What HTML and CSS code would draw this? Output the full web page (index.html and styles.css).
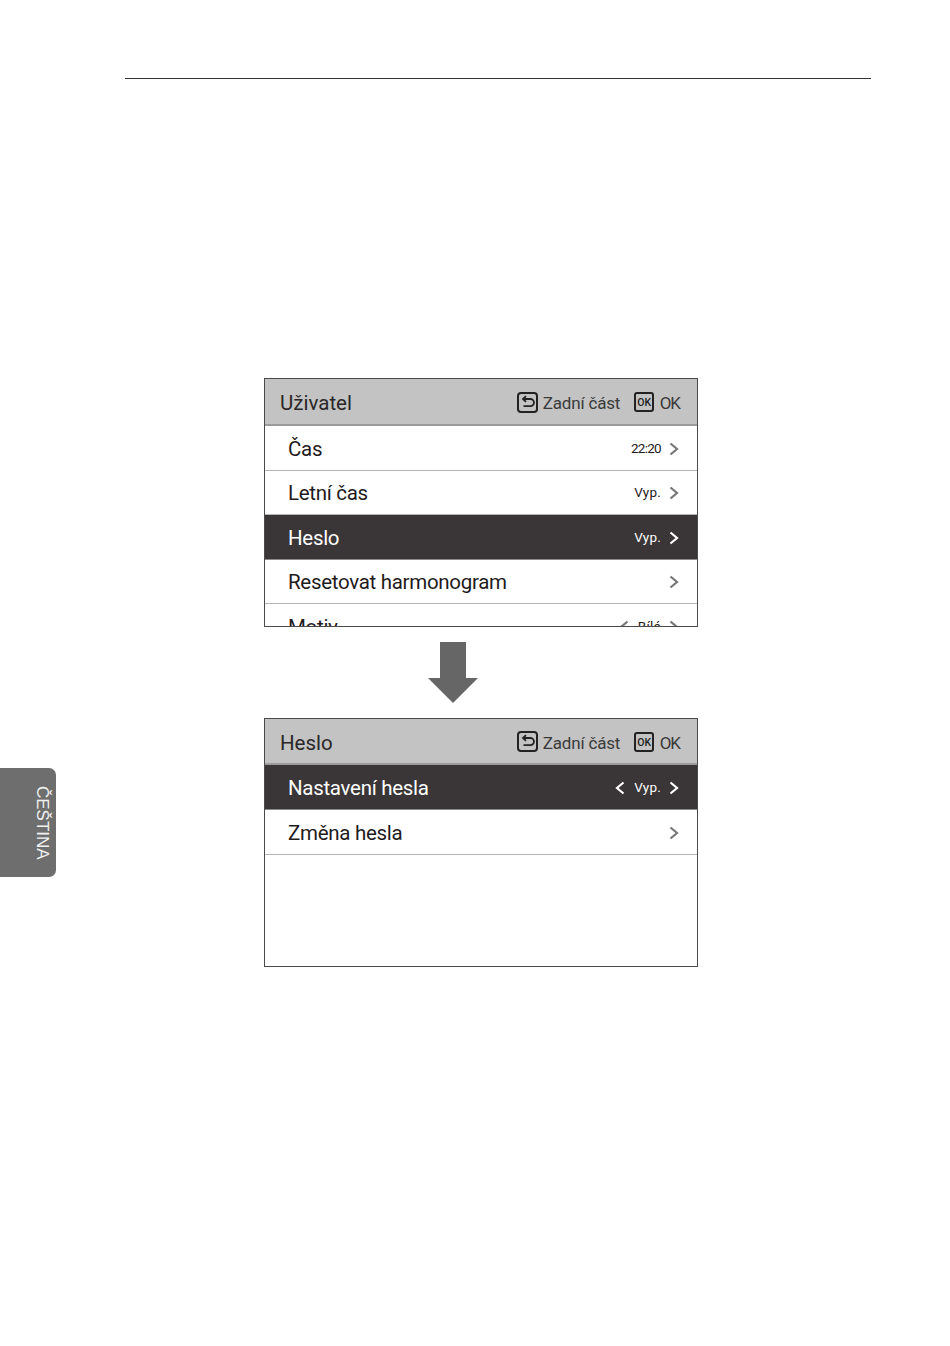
FILE: index.html
```html
<!DOCTYPE html>
<html lang="cs">
<head>
<meta charset="utf-8">
<title>Heslo</title>
<link rel="stylesheet" href="styles.css">
</head>
<body>
<div class="page">
  <aside class="side"><div class="tab"><span class="tab-text">ČEŠTINA</span></div></aside>
  <main class="main">
    <div class="rule"></div>
    <div class="figure">
      <section class="panel">
        <header class="head">
          <span class="title">Uživatel</span>
          <span class="hint">
            <svg class="ic-back" viewBox="0 0 21 21"><rect x="1" y="1" width="19" height="19" rx="3" fill="none" stroke="#222" stroke-width="2"/><path d="M7 7h6.4a3.6 3.6 0 0 1 0 7.2H6.5M9 4.2 6 7l3 2.8" fill="none" stroke="#222" stroke-width="1.8"/></svg>
            <span class="hint-t">Zadní část</span>
            <span class="ic-ok">OK</span>
            <span class="hint-t hint-ok">OK</span>
          </span>
        </header>
        <div class="row"><span class="label">Čas</span><span class="val val-time">22:20</span><svg class="chev" viewBox="0 0 10 14"><path d="M1.5 1.5l6.5 5.5-6.5 5.5" /></svg></div>
        <div class="row"><span class="label">Letní čas</span><span class="val">Vyp.</span><svg class="chev" viewBox="0 0 10 14"><path d="M1.5 1.5l6.5 5.5-6.5 5.5" /></svg></div>
        <div class="row sel"><span class="label">Heslo</span><span class="val">Vyp.</span><svg class="chev" viewBox="0 0 10 14"><path d="M1.5 1.5l6.5 5.5-6.5 5.5" /></svg></div>
        <div class="row"><span class="label">Resetovat harmonogram</span><svg class="chev" viewBox="0 0 10 14"><path d="M1.5 1.5l6.5 5.5-6.5 5.5" /></svg></div>
        <div class="row last"><span class="label">Motiv</span><svg class="chev prev" viewBox="0 0 10 14"><path d="M8.5 1.5L2 7l6.5 5.5" /></svg><span class="val">Bílá</span><svg class="chev" viewBox="0 0 10 14"><path d="M1.5 1.5l6.5 5.5-6.5 5.5" /></svg></div>
      </section>
      <div class="arrow"><svg viewBox="0 0 50 61" width="50" height="61"><path d="M12 0h26v36h12L25 61 0 36h12z" fill="#666"/></svg></div>
      <section class="panel panel-b">
        <header class="head">
          <span class="title">Heslo</span>
          <span class="hint">
            <svg class="ic-back" viewBox="0 0 21 21"><rect x="1" y="1" width="19" height="19" rx="3" fill="none" stroke="#222" stroke-width="2"/><path d="M7 7h6.4a3.6 3.6 0 0 1 0 7.2H6.5M9 4.2 6 7l3 2.8" fill="none" stroke="#222" stroke-width="1.8"/></svg>
            <span class="hint-t">Zadní část</span>
            <span class="ic-ok">OK</span>
            <span class="hint-t hint-ok">OK</span>
          </span>
        </header>
        <div class="row sel"><span class="label">Nastavení hesla</span><svg class="chev prev" viewBox="0 0 10 14"><path d="M8.5 1.5L2 7l6.5 5.5" /></svg><span class="val">Vyp.</span><svg class="chev" viewBox="0 0 10 14"><path d="M1.5 1.5l6.5 5.5-6.5 5.5" /></svg></div>
        <div class="row"><span class="label">Změna hesla</span><svg class="chev" viewBox="0 0 10 14"><path d="M1.5 1.5l6.5 5.5-6.5 5.5" /></svg></div>
      </section>
    </div>
  </main>
</div>
</body>
</html>
```
FILE: styles.css
```css
* { box-sizing: border-box; }
html, body { margin: 0; padding: 0; background: #fff; }
body { font-family: Roboto, "Liberation Sans", sans-serif; color: #1f1b1c; }
.page { display: flex; width: 950px; height: 1346px; overflow: hidden; }
.side { width: 125px; padding-top: 768px; flex: none; }
.tab { width: 56px; height: 109px; background: #6e6e6e; border-radius: 0 7px 7px 0; display: flex; align-items: center; justify-content: flex-end; padding-right: 5px; }
.tab-text { writing-mode: vertical-rl; font-family: "Liberation Sans", sans-serif; font-size: 17px; color: #f2f2f2; line-height: 18px; }
.main { width: 746px; padding-top: 78px; }
.rule { height: 1px; background: #333; }
.figure { width: 434px; margin: 299px 0 0 139px; display: flex; flex-direction: column; }
.panel { width: 434px; height: 249px; border: 1px solid #4a4a4a; overflow: hidden; background: #fff; }
.head { height: 47px; padding: 3px 17px 0 15px; background: #c3c3c3; border-bottom: 2px solid #9b9b9b; display: flex; align-items: center; justify-content: space-between; }
.panel-b .head { height: 46px; padding-top: 3px; }
.title { font-size: 20.5px; line-height: 24px; color: #2a2628; }
.hint { display: flex; align-items: center; }
.ic-back { width: 21px; height: 21px; flex: none; margin-top: -2px; }
.hint-t { font-size: 17px; letter-spacing: -0.2px; color: #3a3a3a; margin-left: 5px; }
.hint-ok { letter-spacing: -1px; margin-left: 5.5px; }
.ic-ok { width: 20px; height: 20px; margin-left: 14px; margin-top: -2px; border: 2px solid #222; border-radius: 3px; font-size: 10.5px; font-weight: 500; line-height: 17px; text-align: center; color: #222; flex: none; }
.row { height: 44.5px; padding: 2px 18px 0 23px; border-bottom: 1px solid #b5b5b5; display: flex; align-items: center; background: #fff; }
.panel-b .row { height: 45px; }
.row.last { border-bottom: 0; }
.row.sel { background: #3a3536; color: #fff; border-bottom-color: #8a8a8a; }
.label { font-size: 20.5px; letter-spacing: -0.3px; line-height: 24px; margin-right: auto; }
.val { font-size: 13.5px; letter-spacing: 0.2px; margin: 0 8px 2px 0; color: #1f1b1c; }
.val-time { letter-spacing: -0.7px; }
.sel .val { color: #fff; }
.chev { width: 10px; height: 14px; flex: none; fill: none; stroke: #777; stroke-width: 2.2; }
.chev.prev { margin-right: 9px; }
.sel .chev { stroke: #fff; }
.arrow { height: 91px; padding: 15px 0 0 164px; }
.arrow svg { display: block; }
```
